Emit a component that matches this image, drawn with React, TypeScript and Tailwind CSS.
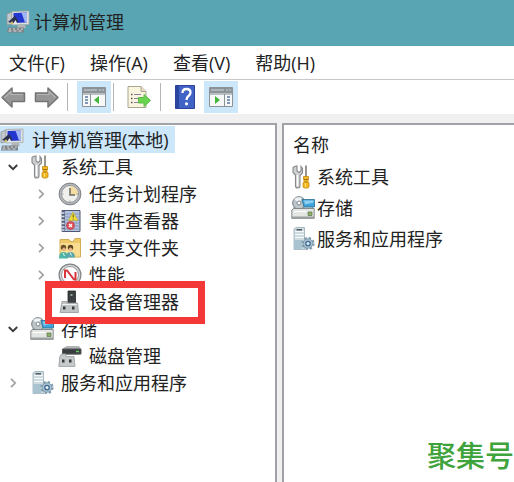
import type { ReactNode } from "react"

function ComputerIcon() {
  return (
    <svg width="24" height="24" viewBox="0 0 24 24" aria-hidden="true">
      <path d="M1 4l5-2v12l-5 1z" fill="#c3c8cc" stroke="#8f969b" strokeWidth=".8" />
      <path d="M6 1.500l17-.5v13.500l-17 .5z" fill="#dfe1dc" stroke="#a5aaab" strokeWidth=".8" />
      <path d="M7.500 3l13.500-.5v10l-13.500.5z" fill="#2337d0" />
      <path d="M15.500 2.700l5.500-.2v10l-2 .1z" fill="#9fb4f2" />
      <path d="M2 12l7-6 3.500 5.500-3 2.500z" fill="#2b3050" />
      <path d="M4 14l2-3 2 3z" fill="#d9c36a" />
      <path d="M7 14l2.500-4 2 4z" fill="#e6eaf2" />
      <path d="M12 15h7l1 3h-9z" fill="#b3b7b8" />
      <path d="M2 17.500h16v5H1z" fill="#7d8487" />
      <path d="M3 19h2m2 0h2m2 0h2m2 0h2M2.500 21h3m2 0h3m2 0h3" stroke="#d9dee1" strokeWidth="1.200" />
    </svg>
  )
}

function ToolsIcon() {
  return (
    <svg width="24" height="24" viewBox="0 0 24 24" aria-hidden="true">
      <path
        d="M2 2.500v5l2.500 2.500v11q0 2 2.200 2t2.300-2V10.500L11.500 8V3.500L10 1.500v4.500l-2 1.500-2-1.500V1L3.500 1.500z"
        fill="#d0d2d2"
        stroke="#85898a"
        strokeWidth="1.100"
      />
      <path d="M6.500 10v11" stroke="#fff" strokeWidth="1.500" />
      <path d="M15 .5v12" stroke="#8d8a80" strokeWidth="1.800" />
      <path d="M12.500 11.500h5v3.500l-1 1 1.500 2v4l-1.500 1h-3l-1.500-1v-4l1.500-2-1-1z" fill="#f6b81c" stroke="#c08a15" strokeWidth=".8" />
      <path d="M13 14.500h4M13.500 17h3" stroke="#a0720f" />
      <path d="M14.500 18v4" stroke="#ffe07a" />
    </svg>
  )
}

function ClockIcon() {
  return (
    <svg width="24" height="24" viewBox="0 0 24 24" aria-hidden="true">
      <circle cx="12" cy="12" r="10.900" fill="#b4b7bb" stroke="#7d8085" />
      <circle cx="12" cy="12" r="8.500" fill="#efefec" stroke="#94979b" />
      <path d="M12 13V4a8 8 0 018 9z" fill="#f3dda2" />
      <path d="M12 6v7h5" fill="none" stroke="#6c6a66" strokeWidth="1.500" />
      <path d="M12 18.500V20M4 12h1.500M18.500 12H20" stroke="#9a9da2" />
    </svg>
  )
}

function EventIcon() {
  return (
    <svg width="24" height="24" viewBox="0 0 24 24" aria-hidden="true">
      <path d="M4 1.500h18v21H4z" fill="#b3c3dd" stroke="#4c5874" />
      <path d="M7 5h14M7 8h14M7 11h14M7 14h14M7 17h14M7 20h14" stroke="#8598be" />
      <path d="M4 1.500h3v21H4z" fill="#586280" />
      <path d="M2.500 4h4M2.500 7.500h4M2.500 11h4M2.500 14.500h4M2.500 18h4M2.500 21h4" stroke="#d6dae2" strokeWidth="1.300" />
      <path d="M15 3l5 8.500H10.500z" fill="#f0de3c" stroke="#c0ad34" strokeWidth=".7" />
      <path d="M15.200 5.500v3M15.200 9.500v1" stroke="#55501c" />
      <circle cx="12.500" cy="16.500" r="4" fill="#e2505a" stroke="#bd3a48" strokeWidth=".7" />
      <path d="M11 15l3 3m0-3l-3 3" stroke="#fff" strokeWidth="1.200" />
    </svg>
  )
}

function SharedFolderIcon() {
  return (
    <svg width="24" height="24" viewBox="0 0 24 24" aria-hidden="true">
      <path d="M2 3.500h9l2 2h2l2-3h5.500V21H2z" fill="#efc968" stroke="#cda54d" strokeWidth=".9" />
      <path d="M2.500 7h19.500v13.500H2.500z" fill="#f8dc90" />
      <circle cx="5.500" cy="11.500" r="2.700" fill="#6b5028" />
      <circle cx="6" cy="13.200" r="1.700" fill="#e8b48c" />
      <path d="M1 22.500q0-6.500 4.500-6.500t4.500 6.500z" fill="#4cb7a4" />
      <circle cx="12.500" cy="11.500" r="2.700" fill="#5f4722" />
      <circle cx="12.500" cy="13.200" r="1.700" fill="#e8b48c" />
      <path d="M8 21.500q0-5.500 4.500-5.500t4.500 5.500z" fill="#58a8ae" />
      <path d="M5 17l1.500 3M12 16.500l1.500 3" stroke="#e9f4ef" />
    </svg>
  )
}

function PerformanceIcon() {
  return (
    <svg width="24" height="24" viewBox="0 0 24 24" aria-hidden="true">
      <circle cx="12" cy="12" r="10.900" fill="#d8d9d9" stroke="#808487" strokeWidth="1.200" />
      <circle cx="12" cy="12" r="8.500" fill="#fff" stroke="#95999b" />
      <path d="M7 15V7.500h2l7 9h1.500V9" fill="none" stroke="#d6373b" strokeWidth="2" />
    </svg>
  )
}

function DeviceIcon() {
  return (
    <svg width="24" height="24" viewBox="0 0 24 24" aria-hidden="true">
      <path d="M10 1h7.500v12H10z" fill="#3c4042" stroke="#252829" strokeWidth=".8" />
      <path d="M12.500 4h2v2h-2z" fill="#8ca29b" />
      <path d="M4 11.500h5v1.500h10.500l1 9.500H2z" fill="#c1c4c5" stroke="#94989a" strokeWidth=".8" />
      <path d="M4 14.500h15" stroke="#eef0f0" />
      <path d="M5 16.500h2.500v3H5zM14 16.500h2.500v3H14z" fill="#363a3b" />
    </svg>
  )
}

function StorageIcon() {
  return (
    <svg width="24" height="24" viewBox="0 0 24 24" aria-hidden="true">
      <path d="M1.500 14l3-5H20l3 5z" fill="#d5d9d9" stroke="#81888b" strokeWidth=".7" />
      <circle cx="8" cy="7" r="6.300" fill="#bcc6cb" stroke="#727b80" />
      <path d="M8 7L3 3q4-3 8-1z" fill="#eef3f5" />
      <circle cx="8" cy="7" r="2" fill="#fff" stroke="#7c878d" />
      <path d="M11 3.500h12.500v7.500H13z" fill="#3ea3da" stroke="#2c6f90" strokeWidth=".8" />
      <path d="M13 4.500h9.500v2l-8.500 2z" fill="#8fd0ee" />
      <path d="M.8 14l2-1.500h20.400v10H.8z" fill="#e3e6e2" stroke="#7b8182" strokeWidth=".9" />
      <path d="M1 20.500h22v2.500H1z" fill="#9ba1a1" />
      <path d="M3 15.500h12" stroke="#fff" />
      <path d="M17 16h4v3.500h-4z" fill="#8fae6c" stroke="#597546" strokeWidth=".7" />
    </svg>
  )
}

function DiskIcon() {
  return (
    <svg width="24" height="24" viewBox="0 0 24 24" aria-hidden="true">
      <path d="M6 3.500L9 2h12l2 3v5l-3 1H5V5z" fill="#b0b4b5" />
      <path d="M4.500 5H23v5H4.500z" fill="#393d3f" stroke="#55595b" />
      <path d="M18 7.500h3" stroke="#65cb62" strokeWidth="1.500" />
      <path d="M3.500 10H8v2.500h8l1 10H.8l1-10z" fill="#c6c9ca" stroke="#999da0" strokeWidth=".8" />
      <path d="M4 15.500h2.500v3H4zM11 15.500h2.500v3H11z" fill="#363a3b" />
    </svg>
  )
}

function ServicesIcon() {
  return (
    <svg width="24" height="24" viewBox="0 0 24 24" aria-hidden="true">
      <path d="M3 2l2-1.500h8.500V22.500H3z" fill="#cddae0" stroke="#9dafb8" strokeWidth=".8" />
      <path d="M4 4.500h9M4 7.500h9M4 10.500h9" stroke="#f4f8fa" />
      <path d="M5.500 2.800h5.500" stroke="#4e5b62" strokeWidth="1.500" />
      <path d="M3 13h8v9.500H3z" fill="#a9c3d0" />
      <circle cx="17" cy="16.500" r="5.500" fill="none" stroke="#7f9cad" strokeWidth="2.200" strokeDasharray="2.320 2" />
      <circle cx="17" cy="16.500" r="4.800" fill="#a8c0cf" stroke="#7592a4" strokeWidth=".8" />
      <circle cx="17" cy="16.500" r="2.200" fill="#e6eff5" stroke="#3d6b91" strokeWidth="1.300" />
    </svg>
  )
}

function ArrowIcon({ flip }: { flip?: boolean }) {
  return (
    <svg width="26" height="24" viewBox="0 0 26 24" aria-hidden="true" className={flip ? "-scale-x-100" : ""}>
      <path d="M2 12.500L12 3v5h12.500v8.500H12V22z" fill="#979797" stroke="#747474" strokeWidth="1.500" strokeLinejoin="round" />
      <path d="M4.500 12.500l6.500-6V9.500h12" fill="none" stroke="#b5b5b5" strokeWidth="1.200" />
    </svg>
  )
}

function PanelIcon({ side }: { side: "left" | "right" }) {
  return (
    <svg width="24" height="22" viewBox="0 0 24 22" aria-hidden="true">
      <path d="M.5 1.500h23v19H.5z" fill="#f7f8f8" stroke="#8b9298" />
      <path d="M1 2h22v5H1z" fill="#8b9298" />
      <path d="M2 4h13M17 4h2M20 4h2" stroke="#cfd6db" />
      <path d="M1 8h22" stroke="#7d878e" />
      {side === "left" ? (
        <>
          <path d="M8.500 8v12" stroke="#8b9298" />
          <path d="M3 11h3M3 14h3M3 17h3" stroke="#5977a2" strokeWidth="1.300" />
          <path d="M17 10v8l-5-4z" fill="#42b53b" />
        </>
      ) : (
        <>
          <path d="M15.500 8v12" stroke="#8b9298" />
          <path d="M18 11h3M18 14h3M18 17h3" stroke="#5977a2" strokeWidth="1.300" />
          <path d="M6 10v8l5-4z" fill="#42b53b" />
        </>
      )}
    </svg>
  )
}

function ExportIcon() {
  return (
    <svg width="26" height="24" viewBox="0 0 26 24" aria-hidden="true">
      <path d="M2 1.500h13l5 5v16H2z" fill="#faf5df" stroke="#aaa58f" />
      <path d="M15 1.500v5h5" fill="#e5dec3" stroke="#aaa58f" />
      <path d="M5 9.500h1.500M5 13.500h1.500M5 17.500h1.500" stroke="#555" strokeWidth="1.500" />
      <path d="M8 9.500h7M8 13.500h5M8 17.500h6" stroke="#8c81a2" strokeWidth="1.200" />
      <path d="M12.500 12.500H18V9.500l6.500 6-6.500 6v-3.500h-5.500z" fill="#6bd44e" stroke="#5bb94a" />
    </svg>
  )
}

function HelpIcon() {
  return (
    <svg width="20" height="24" viewBox="0 0 20 24" aria-hidden="true">
      <path d="M.5.5h19v23H.5z" fill="#4263c6" stroke="#2c4399" />
      <path d="M1 1h3v22H1z" fill="#2b469f" />
      <path d="M7.500 8q0-4 4-4t4 3.500q0 2-2 3.500t-2 4" fill="none" stroke="#fff" strokeWidth="2.300" />
      <circle cx="11.500" cy="18.800" r="1.600" fill="#fff" />
    </svg>
  )
}

function Chevron({ open }: { open: boolean }) {
  return open ? (
    <svg width="10" height="10" viewBox="0 0 10 10" aria-hidden="true">
      <path d="M.8 3L5 7.200 9.200 3" fill="none" stroke="#3b3b3b" strokeWidth="1.900" />
    </svg>
  ) : (
    <svg width="10" height="10" viewBox="0 0 10 10" aria-hidden="true">
      <path d="M3 .8L7.200 5 3 9.200" fill="none" stroke="#a0a0a0" strokeWidth="1.700" />
    </svg>
  )
}

type Item = {
  label: string
  icon: ReactNode
  level: 1 | 2
  open?: boolean
  marked?: boolean
}

const items: Item[] = [
  { label: "系统工具", icon: <ToolsIcon />, level: 1, open: true },
  { label: "任务计划程序", icon: <ClockIcon />, level: 2, open: false },
  { label: "事件查看器", icon: <EventIcon />, level: 2, open: false },
  { label: "共享文件夹", icon: <SharedFolderIcon />, level: 2, open: false },
  { label: "性能", icon: <PerformanceIcon />, level: 2, open: false },
  { label: "设备管理器", icon: <DeviceIcon />, level: 2, marked: true },
  { label: "存储", icon: <StorageIcon />, level: 1, open: true },
  { label: "磁盘管理", icon: <DiskIcon />, level: 2 },
  { label: "服务和应用程序", icon: <ServicesIcon />, level: 1, open: false },
]

const menus = ["文件(F)", "操作(A)", "查看(V)", "帮助(H)"]

const rows = [
  { label: "系统工具", icon: <ToolsIcon /> },
  { label: "存储", icon: <StorageIcon /> },
  { label: "服务和应用程序", icon: <ServicesIcon /> },
]

function TreeRow({ item }: { item: Item }) {
  return (
    <li className={item.level === 1 ? "relative flex h-[27px] items-center pl-2" : "relative flex h-[27px] items-center pl-9"}>
      <span className="flex w-[22px]">
        {item.open !== undefined && (
          <button aria-label={item.label} aria-expanded={item.open}>
            <Chevron open={item.open} />
          </button>
        )}
      </span>
      <button className="flex items-center gap-[7px] whitespace-nowrap">
        {item.icon}
        {item.label}
      </button>
      {item.marked && (
        <span className="pointer-events-none absolute -top-[7px] -bottom-[9px] left-[45px] z-10 w-40 border-[7px] border-[#f43737]" />
      )}
    </li>
  )
}

export default function App() {
  return (
    <main className="relative flex min-h-screen flex-col bg-[#f0f0f0] font-['Open_Sans','Noto_Sans_CJK_SC',sans-serif] text-lg leading-[26px] text-[#222222]">

      <header className="flex h-[46px] items-center gap-1 bg-[#5aa5b3] pb-[2px] pl-[6px]">
        <ComputerIcon />
        <h1>计算机管理</h1>
      </header>

      <nav className="flex h-[34px] items-center gap-[25px] border-b border-[#c8c8c8] bg-white pl-[9px]">
        {menus.map((menu) => (
          <button key={menu} className="whitespace-nowrap">
            {menu}
          </button>
        ))}
      </nav>

      <div role="toolbar" className="flex h-[34px] items-center bg-white">
        <div className="flex gap-2">
          <button aria-label="后退"><ArrowIcon /></button>
          <button aria-label="前进"><ArrowIcon flip /></button>
        </div>
        <span className="ml-[7px] h-7 w-px bg-[#b5b5b5]" />
        <button aria-label="显示控制台树" className="ml-[9px] flex h-8 w-[34px] items-center justify-center bg-[#cce6fa]">
          <PanelIcon side="left" />
        </button>
        <span className="ml-[2px] h-7 w-px bg-[#b5b5b5]" />
        <button aria-label="导出列表" className="ml-3"><ExportIcon /></button>
        <span className="ml-2 h-7 w-px bg-[#b5b5b5]" />
        <button aria-label="帮助" className="ml-[14px]"><HelpIcon /></button>
        <button aria-label="显示操作窗格" className="ml-[9px] flex h-8 w-[34px] items-center justify-center bg-[#cce6fa]">
          <PanelIcon side="right" />
        </button>
      </div>

      <div className="mt-[9px] flex flex-1 gap-[5px]">

        <aside className="w-[53.9%] shrink-0 border-t-2 border-r-2 border-[#a0a2a8] bg-white pt-px">
          <button className="flex h-[27px] items-center gap-2 bg-[#cce6fa] pr-[6px] whitespace-nowrap">
            <ComputerIcon />
            计算机管理(本地)
          </button>
          <ul>
            {items.map((item) => (
              <TreeRow key={item.label} item={item} />
            ))}
          </ul>
        </aside>

        <section className="flex-1 border-t-2 border-l-2 border-[#a0a2a8] bg-white pt-[3px] pl-[7px]">
          <table>
            <thead>
              <tr>
                <th className="h-[33px] pl-[2px] text-left font-normal">名称</th>
              </tr>
            </thead>
            <tbody>
              {rows.map((row) => (
                <tr key={row.label}>
                  <td className="h-[31px]">
                    <button className="flex items-center gap-[2px] whitespace-nowrap">
                      {row.icon}
                      {row.label}
                    </button>
                  </td>
                </tr>
              ))}
            </tbody>
          </table>
        </section>

      </div>

      <p className="absolute right-0 bottom-2 text-[29px] leading-9 font-medium text-[#3fa33b]">聚集号</p>

    </main>
  )
}
